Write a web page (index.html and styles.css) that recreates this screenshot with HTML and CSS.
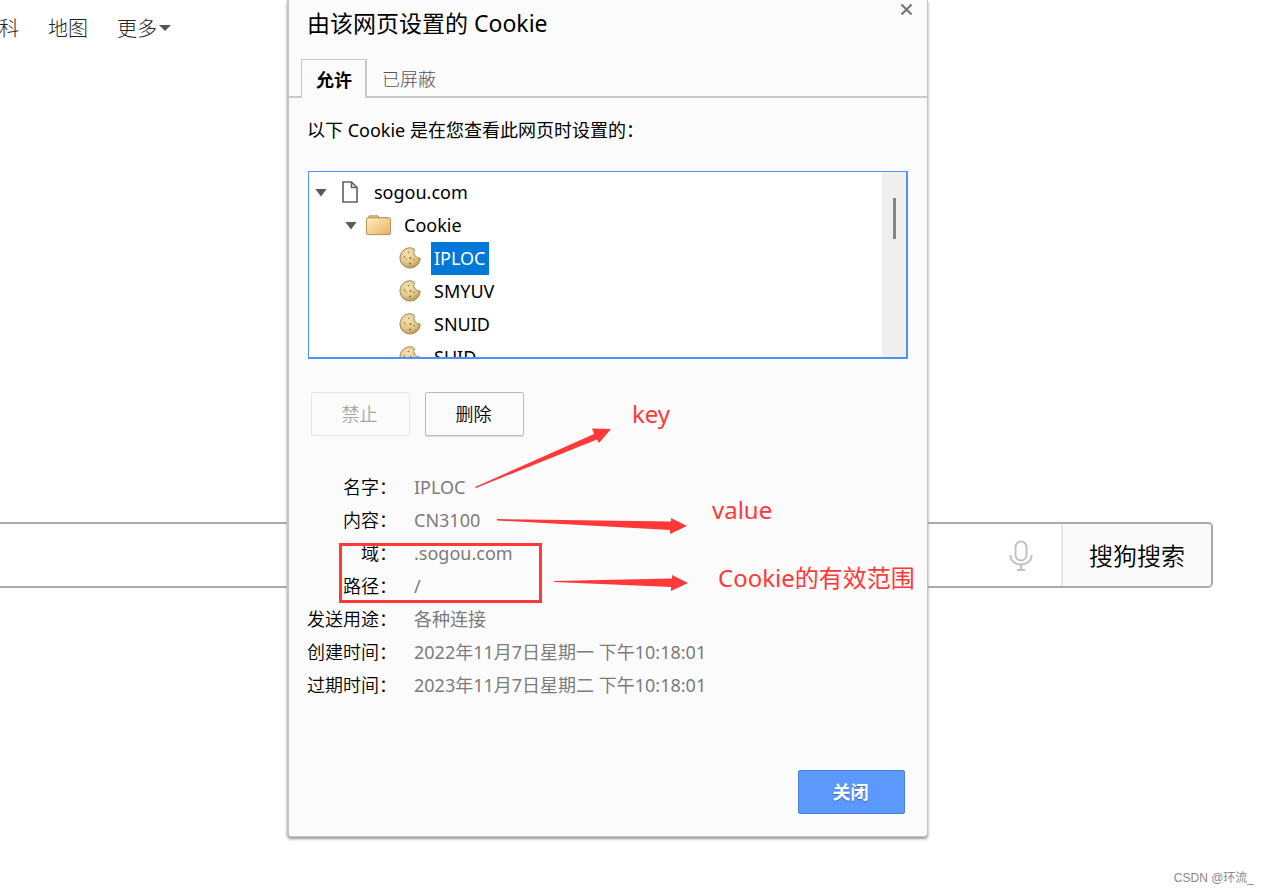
FILE: index.html
```html
<!DOCTYPE html>
<html lang="zh-CN">
<head>
<meta charset="utf-8">
<meta name="viewport" content="width=device-width, initial-scale=1">
<title>由该网页设置的 Cookie</title>
<link rel="stylesheet" href="styles.css">
</head>
<body>
<svg class="defs" width="0" height="0" aria-hidden="true">
  <defs>
    <linearGradient id="folder-fill" x1="0" y1="0" x2="1" y2="1"><stop offset="0" stop-color="#fff0c4"/><stop offset="1" stop-color="#ecae62"/></linearGradient>
    <radialGradient id="cookie-fill" cx=".4" cy=".3" r=".75"><stop offset="0" stop-color="#f3e2b4"/><stop offset=".6" stop-color="#e2c988"/><stop offset="1" stop-color="#b58f4c"/></radialGradient>
    <symbol id="cookie" viewBox="0 0 22 22">
      <path d="M10.500 .7A10.200 10.200 0 1 0 21.300 11.300Q20.500 10.300 19.500 10.800Q17.800 11 17.200 9.400Q14.800 9 15.300 7Q13.900 5.300 15.300 4Q15.700 2.600 14.700 1.700Q12.700 .8 10.500 .7Z" fill="url(#cookie-fill)" stroke="#a08a58" stroke-width="1"/>
      <g fill="#8f6d3c"><circle cx="9.500" cy="5.500" r=".8"/><circle cx="5.500" cy="10" r=".8"/><circle cx="11.500" cy="11" r="1"/><circle cx="7" cy="12" r=".6"/><circle cx="15" cy="12.500" r=".8"/><circle cx="11" cy="16.500" r="1"/></g>
    </symbol>
  </defs>
</svg>

<nav class="nav">
  <a href="#">科</a>
  <a href="#">地图</a>
  <a href="#" class="more">更多<svg width="12" height="6" viewBox="0 0 12 6" aria-hidden="true"><path d="M0 0h12L6 6z" fill="#555"/></svg></a>
</nav>

<form class="search">
  <input type="text" class="query" aria-label="搜索">
  <button type="button" class="mic" aria-label="语音">
    <svg width="24" height="32" viewBox="0 0 24 32" fill="none" stroke="#c4c0c0" stroke-width="2" aria-hidden="true"><rect x="6.500" y="1.500" width="11" height="19" rx="5.500"/><path d="M1.500 15v1a10.500 8.500 0 0 0 21 0v-1M12 25v5M8 30h8"/></svg>
  </button>
  <button type="button" class="submit">搜狗搜索</button>
</form>

<p class="watermark">CSDN @环流_</p>

<section class="dialog" role="dialog" aria-labelledby="dialog-title">
  <button type="button" class="close-x" aria-label="关闭"><svg width="13" height="13" viewBox="0 0 13 13" aria-hidden="true"><path d="M1.500 1.500l10 10M11.500 1.500l-10 10" stroke="#777" stroke-width="2.200"/></svg></button>
  <h1 id="dialog-title">由该网页设置的 Cookie</h1>
  <div class="tabs" role="tablist">
    <button type="button" class="tab active" role="tab" aria-selected="true">允许</button>
    <button type="button" class="tab" role="tab" aria-selected="false">已屏蔽</button>
  </div>
  <div class="content">
    <p class="intro">以下 Cookie 是在您查看此网页时设置的：</p>
    <div class="tree-box">
      <ul class="tree">
        <li class="row site"><button type="button" class="twisty" aria-label="收起 sogou.com"></button>
          <svg class="page-icon" width="16" height="22" viewBox="0 0 16 22" fill="#fff" stroke="#606060" stroke-width="1.600" aria-hidden="true"><path d="M1 1h8.500L15 6.500V21H1zM9.500 1v5.500H15"/></svg><span class="name">sogou.com</span></li>
        <li class="row group"><button type="button" class="twisty" aria-label="收起 Cookie"></button>
          <svg class="folder-icon" width="25" height="22" viewBox="0 0 26 22" aria-hidden="true"><path d="M2.500 4V2.500l1-1h9l1.500 2h9.500l.5 1" fill="#e9cf96" stroke="#a88554"/><rect x=".5" y="3.500" width="25" height="17.500" rx="1.500" fill="url(#folder-fill)" stroke="#b58a51"/></svg><span class="name">Cookie</span></li>
        <li class="row item"><svg width="22" height="22" aria-hidden="true"><use href="#cookie"/></svg><span class="name selected">IPLOC</span></li>
        <li class="row item"><svg width="22" height="22" aria-hidden="true"><use href="#cookie"/></svg><span class="name">SMYUV</span></li>
        <li class="row item"><svg width="22" height="22" aria-hidden="true"><use href="#cookie"/></svg><span class="name">SNUID</span></li>
        <li class="row item"><svg width="22" height="22" aria-hidden="true"><use href="#cookie"/></svg><span class="name">SUID</span></li>
      </ul>
      <div class="track"><div class="thumb"></div></div>
    </div>
    <div class="actions">
      <button type="button" class="btn" disabled>禁止</button>
      <button type="button" class="btn">删除</button>
    </div>
    <dl class="details">
      <dt>名字：</dt><dd>IPLOC</dd>
      <dt>内容：</dt><dd>CN3100</dd>
      <dt>域：</dt><dd>.sogou.com</dd>
      <dt>路径：</dt><dd>/</dd>
      <dt>发送用途：</dt><dd>各种连接</dd>
      <dt>创建时间：</dt><dd>2022年11月7日星期一 下午10:18:01</dd>
      <dt>过期时间：</dt><dd>2023年11月7日星期二 下午10:18:01</dd>
    </dl>
    <div class="footer"><button type="button" class="btn primary">关闭</button></div>
  </div>

  <svg class="arrows" width="640" height="836" viewBox="288 0 640 836" aria-hidden="true">
    <g fill="#ff3838">
      <path d="M475 487L594 434L592 428.500L611 429L599 443L597 439.500L476 488Z"/>
      <path d="M497 519L671 521.500V518L687 526L670 534V530L497 520.500Z"/>
      <path d="M554 581L672 578.500V575L688 583L671 591V587L554 582Z"/>
    </g>
    <rect x="340.500" y="544.500" width="200" height="57" fill="none" stroke="#ff3838" stroke-width="3"/>
  </svg>
  <span class="note note-key">key</span>
  <span class="note note-value">value</span>
  <span class="note note-scope">Cookie的有效范围</span>
</section>
</body>
</html>
```
FILE: styles.css
```css
* { box-sizing: border-box; }

body {
  margin: 0;
  min-height: 100vh;
  display: flex;
  flex-direction: column;
  position: relative;
  overflow-x: hidden;
  background: #fff;
  color: #000;
  font: 18px/33px "Noto Sans", "Noto Sans CJK SC", sans-serif;
}

button, input { font: inherit; color: inherit; margin: 0; padding: 0; border: 0; background: none; }
h1, p, ul, dl, dd { margin: 0; padding: 0; }
svg { display: block; flex: none; }
.defs { position: absolute; }

.nav {
  display: flex;
  gap: 29px;
  height: 56px;
  margin-left: -1px;
  align-items: center;
  font-size: 20px;
  font-weight: 300;
}
.nav a { color: #222; text-decoration: none; }
.more { display: flex; align-items: center; gap: 2px; }

.search {
  display: flex;
  height: 66px;
  margin: 466px 57px 0 0;
  border: 2px solid #aaa;
  border-left: 0;
  border-radius: 0 5px 5px 0;
  overflow: hidden;
}
.query { flex: 1; min-width: 0; }
.mic { padding: 2px 28px 0 0; }
.submit {
  width: 150px;
  border-left: 2px solid #e6e6e6;
  background: #fafafa;
  font-size: 24px;
  font-weight: 350;
}

.watermark {
  margin: auto 16px 7px auto;
  color: #888;
  font: 12px/16px "Liberation Sans", "Noto Sans CJK SC", sans-serif;
}

.dialog {
  position: absolute;
  top: 0;
  left: 287px;
  width: 641px;
  border: solid #c4c4c4;
  border-width: 0 1px 1px 2px;
  border-radius: 0 0 4px 4px;
  background: #fbfbfb;
  box-shadow: 0 2px 3px #999;
}
.dialog h1 { padding: 7px 18px 19px; font-size: 23px; font-weight: 400; }
.close-x { position: absolute; top: 3px; right: 14px; }

.tabs { display: flex; padding-left: 12px; border-bottom: 2px solid #c8c8c8; }
.tab { height: 37px; padding: 4px 16px 0 15px; color: #555; font-weight: 300; }
.tab.active {
  height: 39px;
  margin-bottom: -2px;
  padding: 2px 13px 0 14px;
  border: solid #c8c8c8;
  border-width: 1px 2px 0 1px;
  background: #fbfbfb;
  color: #000;
  font-weight: 700;
}

.content { padding: 16px 19px 22px; }
.intro { margin-left: -1px; }

.tree-box {
  display: flex;
  height: 188px;
  margin-top: 24px;
  border: solid #4d90fe;
  border-width: 1px 2px 2px 1px;
  background: #fff;
  overflow: hidden;
}
.tree { flex: 1; padding-top: 4px; list-style: none; }
.row { display: flex; height: 33px; align-items: center; }
.site { padding-left: 6px; }
.group { padding-left: 36px; }
.item { padding-left: 90px; }
.row svg { margin-bottom: 2px; }
.twisty {
  width: 12px;
  height: 8px;
  background: #5a5a5a;
  clip-path: polygon(0 0, 100% 0, 50% 100%);
}
.row .page-icon { margin-left: 15px; margin-right: 13px; }
.row .folder-icon { margin-left: 9px; margin-right: 10px; }
.name { padding: 0 3px; }
.item .name { margin-left: 10px; }
.name.selected { background: #0078d7; color: #fff; }
.track { width: 24px; padding: 26px 0 0 11px; background: #efefef; }
.thumb { width: 3px; height: 41px; background: #858585; }

.actions { display: flex; gap: 15px; margin: 33px 3px 35px; }
.btn {
  width: 99px;
  height: 44px;
  padding-right: 2px;
  border: 1px solid #bbb;
  border-radius: 2px;
  background: #fbfbfb;
  box-shadow: 0 1px 1px #ddd;
  font-weight: 350;
}
.btn:disabled { border-color: #e6e6e6; color: #aaa69c; box-shadow: none; }

.details {
  display: grid;
  grid-template-columns: 90px 1fr;
  column-gap: 17px;
  margin-left: -1px;
}
.details dt { text-align: right; font-weight: 350; }
.details dd { color: #7b7b7b; }

.footer { display: flex; justify-content: flex-end; padding: 68px 3px 0; }
.btn.primary {
  width: 107px;
  border-color: #4b7fdc;
  background: #5b98ff;
  box-shadow: none;
  color: #fff;
  font-weight: 700;
  text-shadow: 0 1px 1px #3a6bc0;
}

.arrows { position: absolute; top: 0; left: -1px; pointer-events: none; }
.note { position: absolute; color: #ff3838; font-size: 24px; white-space: nowrap; }
.note-key { top: 397px; left: 343px; }
.note-value { top: 493px; left: 423px; }
.note-scope { top: 561px; left: 429px; }
```
